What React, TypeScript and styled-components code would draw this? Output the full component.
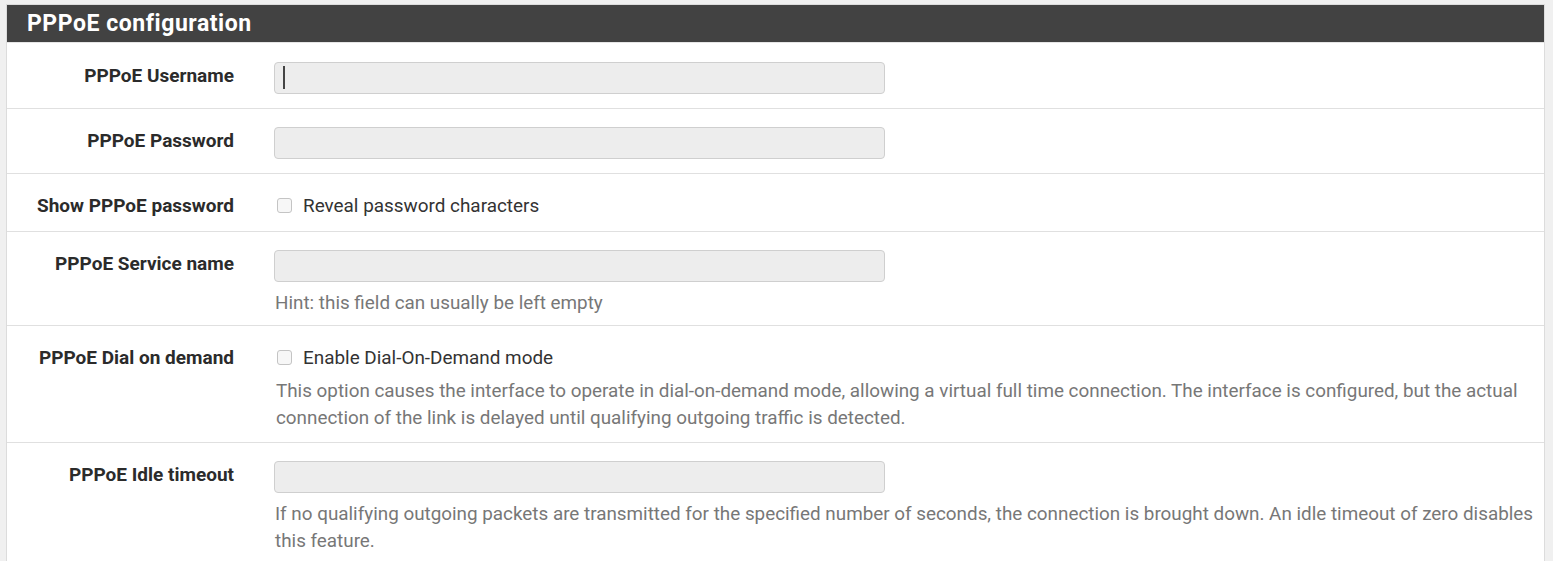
import styled, { createGlobalStyle } from "styled-components";

const GlobalStyle = createGlobalStyle`
  body {
    margin: 0;
    background-color: #f0f0f0;
    font-family: Roboto, "Liberation Sans", sans-serif;
  }
`;

type Field =
    | { kind: "text"; label: string; caret?: boolean; help?: string }
    | { kind: "check"; label: string; text: string; help?: string };

const fields: Field[] = [
    { kind: "text", label: "PPPoE Username", caret: true },
    { kind: "text", label: "PPPoE Password" },
    { kind: "check", label: "Show PPPoE password", text: "Reveal password characters" },
    { kind: "text", label: "PPPoE Service name", help: "Hint: this field can usually be left empty" },
    {
        kind: "check",
        label: "PPPoE Dial on demand",
        text: "Enable Dial-On-Demand mode",
        help: "This option causes the interface to operate in dial-on-demand mode, allowing a virtual full time connection. The interface is configured, but the actual connection of the link is delayed until qualifying outgoing traffic is detected."
    },
    {
        kind: "text",
        label: "PPPoE Idle timeout",
        help: "If no qualifying outgoing packets are transmitted for the specified number of seconds, the connection is brought down. An idle timeout of zero disables this feature."
    }
];

// bottom padding differs a little depending on what ends the row
function bottomPad(f: Field) {
    if (!f.help) return 14;
    return f.kind === "check" ? 10 : 8;
}

export default function App(){
    return  <>
                <GlobalStyle />
                <Panel>
                    <Heading>PPPoE configuration</Heading>
                    {fields.map((f, i) => (
                        <Row key={f.label} $first={i === 0} $bottom={bottomPad(f)}>
                            <Label>{f.label}</Label>
                            <Content>
                                {f.kind === "text" ? (
                                    <InputWrap>
                                        <Input type="text" />
                                        {f.caret && <Caret />}
                                    </InputWrap>
                                ) : (
                                    <CheckLine>
                                        <Check />
                                        {f.text}
                                    </CheckLine>
                                )}
                                {f.help && <Help $afterCheck={f.kind === "check"}>{f.help}</Help>}
                            </Content>
                        </Row>
                    ))}
                </Panel>
            </>
}

const Panel = styled.div`
margin: 4px 8px 0 6px;
border: 1px solid #dcdcdc;
border-bottom: none;
background-color: #fff;
`

const Heading = styled.h2`
margin: 0;
height: 37px;
padding: 0 20px;
display: flex;
align-items: center;
background-color: #424242;
color: #fff;
font-size: 23px;
font-weight: 700;
letter-spacing: 0.55px;
`

const Row = styled.div<{ $first: boolean; $bottom: number }>`
display: grid;
grid-template-columns: 227px 1fr;
column-gap: 40px;
padding: ${p => p.$first ? "19px" : "18px"} 0 ${p => p.$bottom}px 0;
border-top: 1px solid ${p => p.$first ? "#e6e6e6" : "#e0e0e0"};
`

const Label = styled.div`
text-align: right;
font-size: 19px;
line-height: 23px;
padding-top: 2px;
font-weight: 700;
color: #2b2b2b;
`

const Content = styled.div`
display: flex;
flex-direction: column;
`

const InputWrap = styled.div`
position: relative;
width: 611px;
`

const Input = styled.input`
box-sizing: border-box;
display: block;
width: 611px;
height: 32px;
border: 1px solid #cfcfcf;
border-radius: 4px;
background-color: #ededed;
outline: none;
`

const Caret = styled.span`
position: absolute;
left: 9px;
top: 4px;
width: 2px;
height: 23px;
background-color: #444;
`

const CheckLine = styled.label`
display: flex;
align-items: center;
gap: 11px;
padding-top: 2px;
font-size: 18.9px;
line-height: 23px;
color: #333;
`

const Check = styled.span`
box-sizing: border-box;
width: 15px;
height: 15px;
margin-left: 3px;
border: 1px solid #c4c4c4;
border-radius: 3px;
background-color: #f7f7f7;
`

const Help = styled.p<{ $afterCheck: boolean }>`
margin: ${p => p.$afterCheck ? "9px" : "8px"} 0 0;
padding-left: ${p => p.$afterCheck ? "2px" : "1px"};
font-size: 18.85px;
line-height: 27px;
color: #777;
`
